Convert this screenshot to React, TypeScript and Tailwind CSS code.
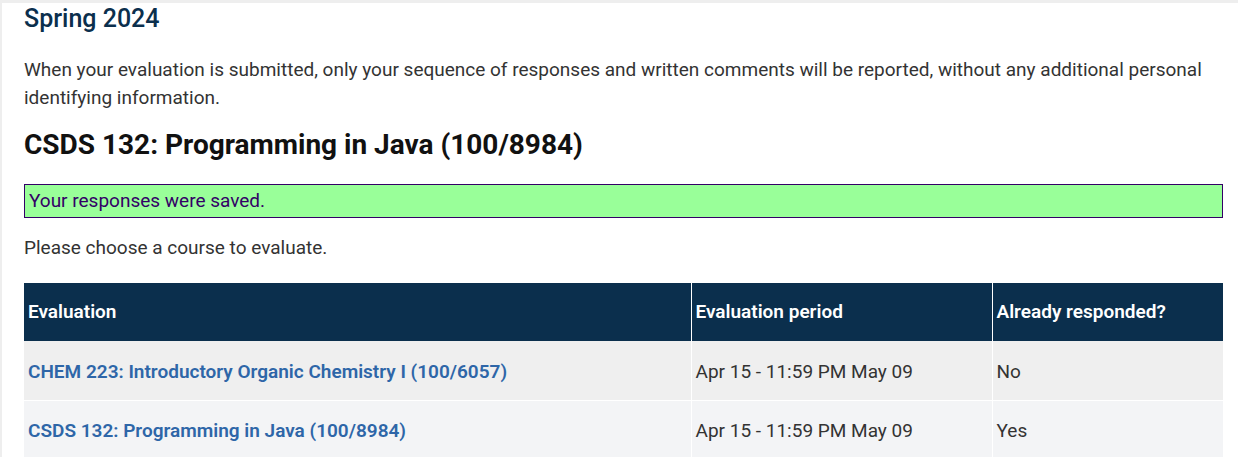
import React from 'react';

const rows = [
  { name: 'CHEM 223: Introductory Organic Chemistry I (100/6057)', period: 'Apr 15 - 11:59 PM May 09', done: 'No' },
  { name: 'CSDS 132: Programming in Java (100/8984)', period: 'Apr 15 - 11:59 PM May 09', done: 'Yes' },
];

const App: React.FC = () => {
  return (
    <div className="min-h-screen bg-[#eeeeee] pl-[2px] pt-[3px] font-['Roboto',sans-serif]">
      <div className="min-h-screen bg-white pl-[22px] pr-[15px]">
        <h2 className="pt-[1px] text-[25px] leading-[30px] font-medium text-[#0b2f4d]">Spring 2024</h2>
        <p className="mt-[22px] text-[19px] leading-[28px] text-[#333333]">
          When your evaluation is submitted, only your sequence of responses and written comments will be reported, without any additional personal identifying information.
        </p>
        <h1 className="mt-[15px] text-[28px] leading-[36px] font-bold text-[#111111]">
          CSDS 132: Programming in Java (100/8984)
        </h1>
        <div className="mt-[21px] h-[34px] border border-[#330066] bg-[#99ff99] px-[4px] text-[19px] leading-[32px] text-[#330066]">
          Your responses were saved.
        </div>
        <p className="mt-[16px] text-[19px] leading-[28px] text-[#333333]">Please choose a course to evaluate.</p>
        <table className="mt-[21px] w-full border-collapse text-left text-[19px]">
          <thead>
            <tr className="h-[58px] bg-[#0b2f4d] text-white">
              <th className="w-[667px] px-[4px] pt-[1px] font-semibold">Evaluation</th>
              <th className="w-[301px] border-l border-white px-[4px] pt-[1px] font-semibold">Evaluation period</th>
              <th className="border-l border-white px-[4px] pt-[1px] font-semibold">Already responded?</th>
            </tr>
          </thead>
          <tbody>
            {rows.map((r, i) => (
              <tr
                key={r.name}
                className={`h-[59px] ${i === 0 ? 'bg-[#efefef]' : 'border-t border-white bg-[#f3f4f6]'}`}
              >
                <td className="px-[4px] pt-[3px]">
                  <a href="#" className="font-semibold text-[#2e66a8]">{r.name}</a>
                </td>
                <td className="border-l border-white px-[4px] pt-[3px] text-[#333333]">{r.period}</td>
                <td className="border-l border-white px-[4px] pt-[3px] text-[#333333]">{r.done}</td>
              </tr>
            ))}
          </tbody>
        </table>
      </div>
    </div>
  );
};

export default App;
